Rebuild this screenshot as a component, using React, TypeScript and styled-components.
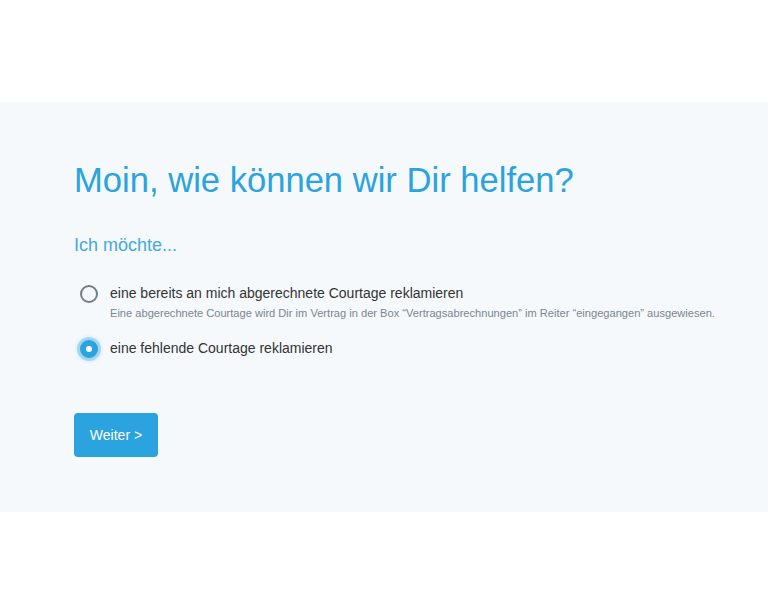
import React, { useState } from 'react';
import styled, { createGlobalStyle } from 'styled-components';

const GlobalStyle = createGlobalStyle`
  html, body {
    margin: 0;
    padding: 0;
    background: #fff;
    font-family: 'Liberation Sans', Arial, sans-serif;
  }
`;

const Page = styled.div`
  padding-top: 102px;
  min-height: 614px;
  box-sizing: border-box;
`;

const Panel = styled.section`
  background-color: #f5f9fc;
  padding: 57px 24px 55px 74px;
  display: flex;
  flex-direction: column;
  align-items: flex-start;
`;

const Title = styled.h1`
  margin: 0;
  color: #2ba3de;
  font-size: 34.6px;
  font-weight: normal;
  line-height: 42px;
`;

const SubTitle = styled.h2`
  margin: 33px 0 0;
  color: #44a9e0;
  font-size: 18px;
  font-weight: normal;
  line-height: 22px;
`;

const OptionList = styled.div`
  display: flex;
  flex-direction: column;
  gap: 17px;
  margin-top: 27px;
`;

const Option = styled.label`
  display: flex;
  align-items: flex-start;
  gap: 12px;
  padding-left: 6px;
  cursor: pointer;
`;

const Radio = styled.span<{ $checked: boolean }>`
  flex: none;
  width: 18px;
  height: 18px;
  margin-top: 2px;
  border-radius: 50%;
  box-sizing: border-box;
  border: 2px solid ${p => (p.$checked ? '#2ba3de' : '#767d85')};
  background: ${p => (p.$checked ? '#2ba3de' : 'transparent')};
  box-shadow: ${p => (p.$checked ? '0 0 0 3px rgba(43, 163, 222, 0.3), 0 0 4px 3px rgba(43, 163, 222, 0.2)' : 'none')};
  display: flex;
  align-items: center;
  justify-content: center;

  &::after {
    content: '';
    width: 6px;
    height: 6px;
    border-radius: 50%;
    background: #fff;
    display: ${p => (p.$checked ? 'block' : 'none')};
  }
`;

const OptionText = styled.div`
  display: flex;
  flex-direction: column;
`;

const OptionLabel = styled.span`
  color: #333;
  font-size: 14px;
  line-height: 20px;
`;

const OptionHint = styled.span`
  color: #7b8590;
  font-size: 11.1px;
  line-height: 16px;
  margin-top: 2px;
  white-space: nowrap;
`;

const Button = styled.button`
  margin-top: 55px;
  width: 84px;
  height: 44px;
  border: none;
  border-radius: 4px;
  background-color: #2ba3de;
  color: #fff;
  font-family: 'Liberation Sans', Arial, sans-serif;
  font-size: 14px;
  cursor: pointer;
`;

const options = [
  {
    id: 'billed',
    label: 'eine bereits an mich abgerechnete Courtage reklamieren',
    hint: 'Eine abgerechnete Courtage wird Dir im Vertrag in der Box \u201cVertragsabrechnungen\u201d im Reiter \u201ceingegangen\u201d ausgewiesen.',
  },
  {
    id: 'missing',
    label: 'eine fehlende Courtage reklamieren',
  },
];

export default function App() {
  const [selected, setSelected] = useState('missing');

  return (
    <>
      <GlobalStyle />
      <Page>
        <Panel>
          <Title>Moin, wie können wir Dir helfen?</Title>
          <SubTitle>Ich möchte...</SubTitle>
          <OptionList>
            {options.map(o => (
              <Option key={o.id} onClick={() => setSelected(o.id)}>
                <Radio $checked={selected === o.id} />
                <OptionText>
                  <OptionLabel>{o.label}</OptionLabel>
                  {o.hint && <OptionHint>{o.hint}</OptionHint>}
                </OptionText>
              </Option>
            ))}
          </OptionList>
          <Button>Weiter &gt;</Button>
        </Panel>
      </Page>
    </>
  );
}
